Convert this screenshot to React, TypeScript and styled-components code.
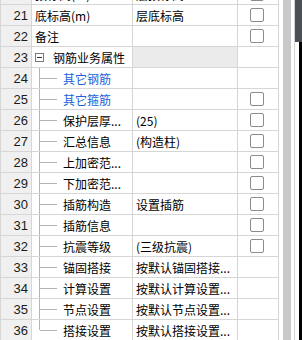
import React from "react";
import styled, { createGlobalStyle } from "styled-components";

const GlobalStyle = createGlobalStyle`
  html, body {
    margin: 0;
    padding: 0;
    background: #ffffff;
    overflow: hidden;
  }
`;

const Screen = styled.div`
  display: flex;
  width: 302px;
  height: 340px;
  overflow: hidden;
  background: #ffffff;
  font-family: "Noto Sans CJK SC", "Noto Sans", sans-serif;
`;

const Grid = styled.div`
  display: grid;
  grid-template-columns: 32px 101px 105px 41px;
  grid-auto-rows: 21px;
  width: 279px;
  margin-top: -16px;
  align-self: flex-start;
`;

const NumCell = styled.div`
  box-sizing: border-box;
  border-left: 1px solid #d6d6d6;
  border-right: 1px solid #d6d6d6;
  border-bottom: 1px solid #d6d6d6;
  background: #f0f0f0;
  display: flex;
  align-items: center;
  justify-content: flex-end;
  padding-right: 3px;
  font-family: "Liberation Sans", Arial, sans-serif;
  font-size: 13px;
  color: #1a1a1a;
`;

const Cell = styled.div<{ $shade?: boolean; $blue?: boolean }>`
  box-sizing: border-box;
  border-right: 1px solid #d6d6d6;
  border-bottom: 1px solid #d6d6d6;
  background: ${(p) => (p.$shade ? "#ebebeb" : "#ffffff")};
  display: flex;
  align-items: center;
  padding-left: 3px;
  font-size: 12px;
  color: ${(p) => (p.$blue ? "#1d5fdc" : "#000000")};
  white-space: nowrap;
  overflow: hidden;
`;

const TreeCell = styled(Cell)`
  padding-left: 0;
  align-items: stretch;
`;

const TreeLabel = styled.span`
  display: flex;
  align-items: center;
`;

const ToggleBox = styled.span`
  box-sizing: border-box;
  width: 9px;
  height: 9px;
  border: 1px solid #7a7a7a;
  align-self: center;
  margin: 1px 9px 0 3px;
  display: flex;
  align-items: center;
  justify-content: center;
  position: relative;
  &::after {
    content: "";
    width: 5px;
    height: 1px;
    background: #333;
  }
`;

const CheckCell = styled(Cell)`
  padding-left: 12px;
`;

const Check = styled.span`
  box-sizing: border-box;
  width: 14px;
  height: 14px;
  border: 1px solid #8c8c8c;
  border-radius: 2px;
  background: #fff;
`;

const Gap = styled.div<{ $w: number }>`
  width: ${(p) => p.$w}px;
  flex: none;
`;

const Track = styled.div`
  width: 8px;
  flex: none;
  background: #c9c9c9;
`;

const Divider = styled.div`
  width: 1px;
  flex: none;
  background: #d4d4d4;
`;

const Edge = styled.div`
  flex: 1;
  display: flex;
  flex-direction: column;
`;

const EdgeTop = styled.div`
  height: 42px;
  background: #4b5056;
`;

const EdgeBody = styled.div`
  flex: 1;
  display: flex;
  &::before {
    content: "";
    width: 4px;
    background: #ffffff;
  }
  &::after {
    content: "";
    flex: 1;
    background: #000000;
  }
`;

function Connector({ last }: { last: boolean }) {
  return (
    <svg width="31" height="20" viewBox="0 0 31 20">
      <line x1="7.5" y1="0" x2="7.5" y2={last ? 10 : 20} stroke="#b4b4b4" strokeWidth="1" />
      <line x1="8" y1="10.5" x2="25" y2="10.5" stroke="#b4b4b4" strokeWidth="1" />
    </svg>
  );
}

type Row = {
  n: number;
  name: string;
  value?: string;
  check: boolean;
  child?: boolean;
  blue?: boolean;
  group?: boolean;
};

const rows: Row[] = [
  { n: 20, name: "顶标高(m)", value: "层顶标高", check: true },
  { n: 21, name: "底标高(m)", value: "层底标高", check: true },
  { n: 22, name: "备注", check: true },
  { n: 23, name: "钢筋业务属性", check: false, group: true },
  { n: 24, name: "其它钢筋", check: false, child: true, blue: true },
  { n: 25, name: "其它箍筋", check: true, child: true, blue: true },
  { n: 26, name: "保护层厚...", value: "(25)", check: true, child: true },
  { n: 27, name: "汇总信息", value: "(构造柱)", check: true, child: true },
  { n: 28, name: "上加密范...", check: true, child: true },
  { n: 29, name: "下加密范...", check: true, child: true },
  { n: 30, name: "插筋构造", value: "设置插筋", check: true, child: true },
  { n: 31, name: "插筋信息", check: true, child: true },
  { n: 32, name: "抗震等级", value: "(三级抗震)", check: true, child: true },
  { n: 33, name: "锚固搭接", value: "按默认锚固搭接...", check: false, child: true },
  { n: 34, name: "计算设置", value: "按默认计算设置...", check: false, child: true },
  { n: 35, name: "节点设置", value: "按默认节点设置...", check: false, child: true },
  { n: 36, name: "搭接设置", value: "按默认搭接设置...", check: false, child: true },
];

export default function App() {
  const lastChild = rows[rows.length - 1].n;
  return (
    <Screen>
      <GlobalStyle />
      <Grid>
        {rows.map((r) => (
          <React.Fragment key={r.n}>
            <NumCell>{r.n}</NumCell>
            {r.group ? (
              <TreeCell>
                <ToggleBox />
                <TreeLabel>{r.name}</TreeLabel>
              </TreeCell>
            ) : r.child ? (
              <TreeCell $blue={r.blue}>
                <Connector last={r.n === lastChild} />
                <TreeLabel>{r.name}</TreeLabel>
              </TreeCell>
            ) : (
              <Cell>{r.name}</Cell>
            )}
            <Cell $shade={r.group}>{r.value}</Cell>
            <CheckCell>{r.check && <Check />}</CheckCell>
          </React.Fragment>
        ))}
      </Grid>
      <Gap $w={4} />
      <Track />
      <Gap $w={3} />
      <Divider />
      <Edge>
        <EdgeTop />
        <EdgeBody />
      </Edge>
    </Screen>
  );
}
